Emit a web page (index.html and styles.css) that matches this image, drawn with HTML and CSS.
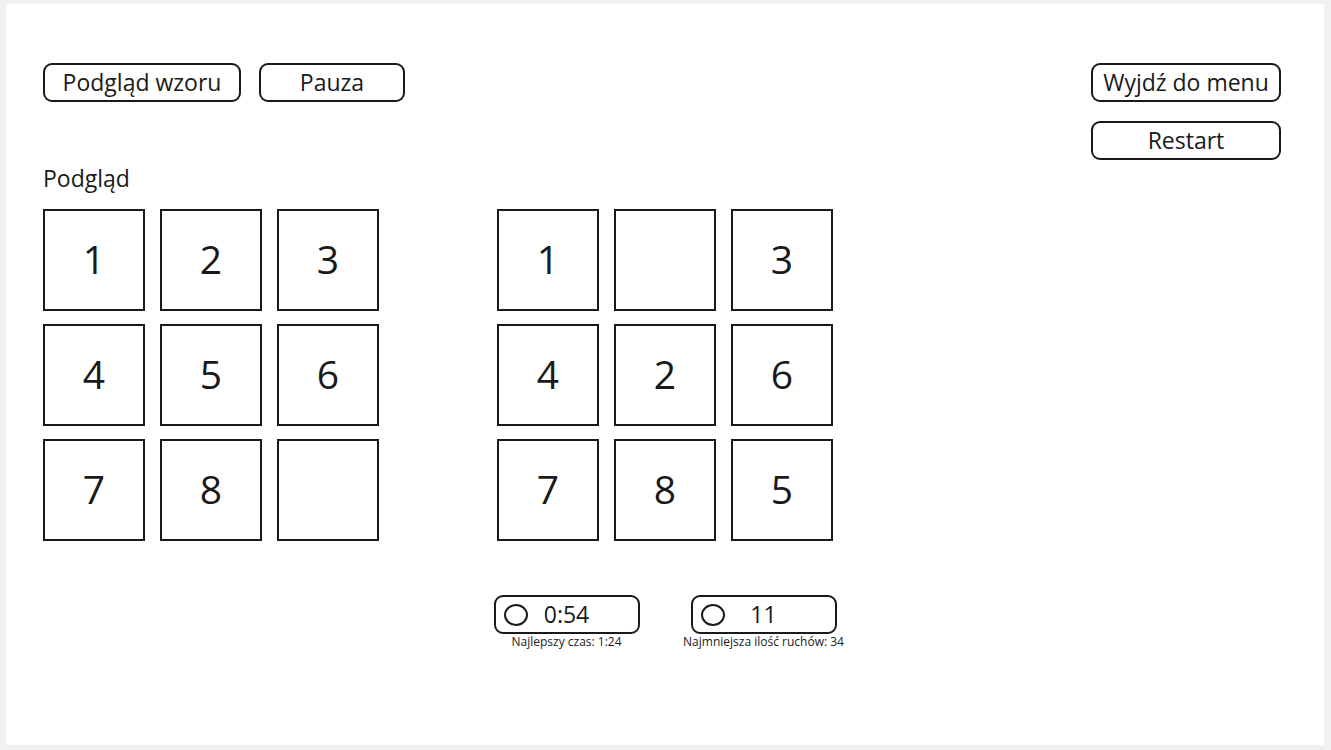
FILE: index.html
```html
<!DOCTYPE html>
<html lang="pl">
<head>
  <meta charset="utf-8">
  <meta name="viewport" content="width=device-width, initial-scale=1">
  <title>Układanka</title>
  <link rel="stylesheet" href="styles.css">
</head>
<body>
  <main class="screen">
    <header class="toolbar">
      <div class="toolbar-left">
        <button type="button" class="button button-preview">Podgląd wzoru</button>
        <button type="button" class="button button-pause">Pauza</button>
      </div>
      <div class="toolbar-right">
        <button type="button" class="button">Wyjdź do menu</button>
        <button type="button" class="button">Restart</button>
      </div>
    </header>

    <div class="content">
      <section class="preview">
        <h1 class="heading">Podgląd</h1>
        <div class="board">
          <div class="tile">1</div>
          <div class="tile">2</div>
          <div class="tile">3</div>
          <div class="tile">4</div>
          <div class="tile">5</div>
          <div class="tile">6</div>
          <div class="tile">7</div>
          <div class="tile">8</div>
          <div class="tile"></div>
        </div>
      </section>

      <section class="game">
        <div class="board">
          <button type="button" class="tile">1</button>
          <div class="tile"></div>
          <button type="button" class="tile">3</button>
          <button type="button" class="tile">4</button>
          <button type="button" class="tile">2</button>
          <button type="button" class="tile">6</button>
          <button type="button" class="tile">7</button>
          <button type="button" class="tile">8</button>
          <button type="button" class="tile">5</button>
        </div>
        <div class="stats">
          <div class="stat">
            <div class="stat-box">
              <svg class="stat-icon" viewBox="0 0 24 22" aria-hidden="true"><ellipse cx="12" cy="11" rx="11" ry="10"/></svg>
              <span class="stat-value">0:54</span>
            </div>
            <p class="stat-note">Najlepszy czas: 1:24</p>
          </div>
          <div class="stat">
            <div class="stat-box">
              <svg class="stat-icon" viewBox="0 0 24 22" aria-hidden="true"><ellipse cx="12" cy="11" rx="11" ry="10"/></svg>
              <span class="stat-value">11</span>
            </div>
            <p class="stat-note">Najmniejsza ilość ruchów: 34</p>
          </div>
        </div>
      </section>
    </div>
  </main>
</body>
</html>
```
FILE: styles.css
```css
* {
  box-sizing: border-box;
}

body {
  display: flex;
  min-height: 100vh;
  margin: 0;
  padding: 4px 7px 5px 6px;
  background: #f1f1f1;
  color: #1a1a1a;
  font-family: "Open Sans", "Noto Sans", sans-serif;
  font-size: 23px;
}

.screen {
  flex: 1;
  padding: 59px 43px 0 37px;
  background: #fff;
}

.toolbar {
  display: flex;
  justify-content: space-between;
  align-items: flex-start;
}

.toolbar-left {
  display: flex;
  gap: 18px;
}

.toolbar-right {
  display: grid;
  gap: 19px;
  width: 190px;
}

.button {
  height: 39px;
  padding: 0;
  border: 2px solid #1a1a1a;
  border-radius: 9px;
  background: #fff;
  color: inherit;
  font: inherit;
  line-height: 35px;
  white-space: nowrap;
}

.button-preview {
  width: 198px;
}

.button-pause {
  width: 146px;
}

.content {
  display: flex;
  align-items: flex-end;
  gap: 89px;
  padding-top: 2px;
}

.preview {
  align-self: flex-start;
}

.heading {
  margin: 0 0 14px;
  font-size: 23px;
  font-weight: 400;
  line-height: 33px;
}

.board {
  display: grid;
  grid-template-columns: repeat(3, 102px);
  gap: 13px 15px;
}

.tile {
  display: flex;
  align-items: center;
  justify-content: center;
  height: 102px;
  padding: 0 0 4px;
  border: 2px solid #1a1a1a;
  background: #fff;
  color: inherit;
  font-family: inherit;
  font-size: 39px;
  line-height: 53px;
}

.game {
  display: grid;
  justify-items: center;
  gap: 54px;
  padding-top: 47px;
}

.stats {
  display: grid;
  grid-template-columns: 197px 197px;
}

.stat {
  display: grid;
  justify-items: center;
}

.stat-box {
  display: grid;
  grid-template-columns: 1fr auto 1fr;
  align-items: center;
  width: 146px;
  height: 39px;
  padding: 0 8px;
  border: 2px solid #1a1a1a;
  border-radius: 9px;
}

.stat-icon {
  width: 24px;
  height: 22px;
  fill: none;
  stroke: #1a1a1a;
  stroke-width: 2;
}

.stat-value {
  line-height: 35px;
}

.stat-note {
  margin: 0;
  font-size: 12px;
  line-height: 16px;
  white-space: nowrap;
}
```
